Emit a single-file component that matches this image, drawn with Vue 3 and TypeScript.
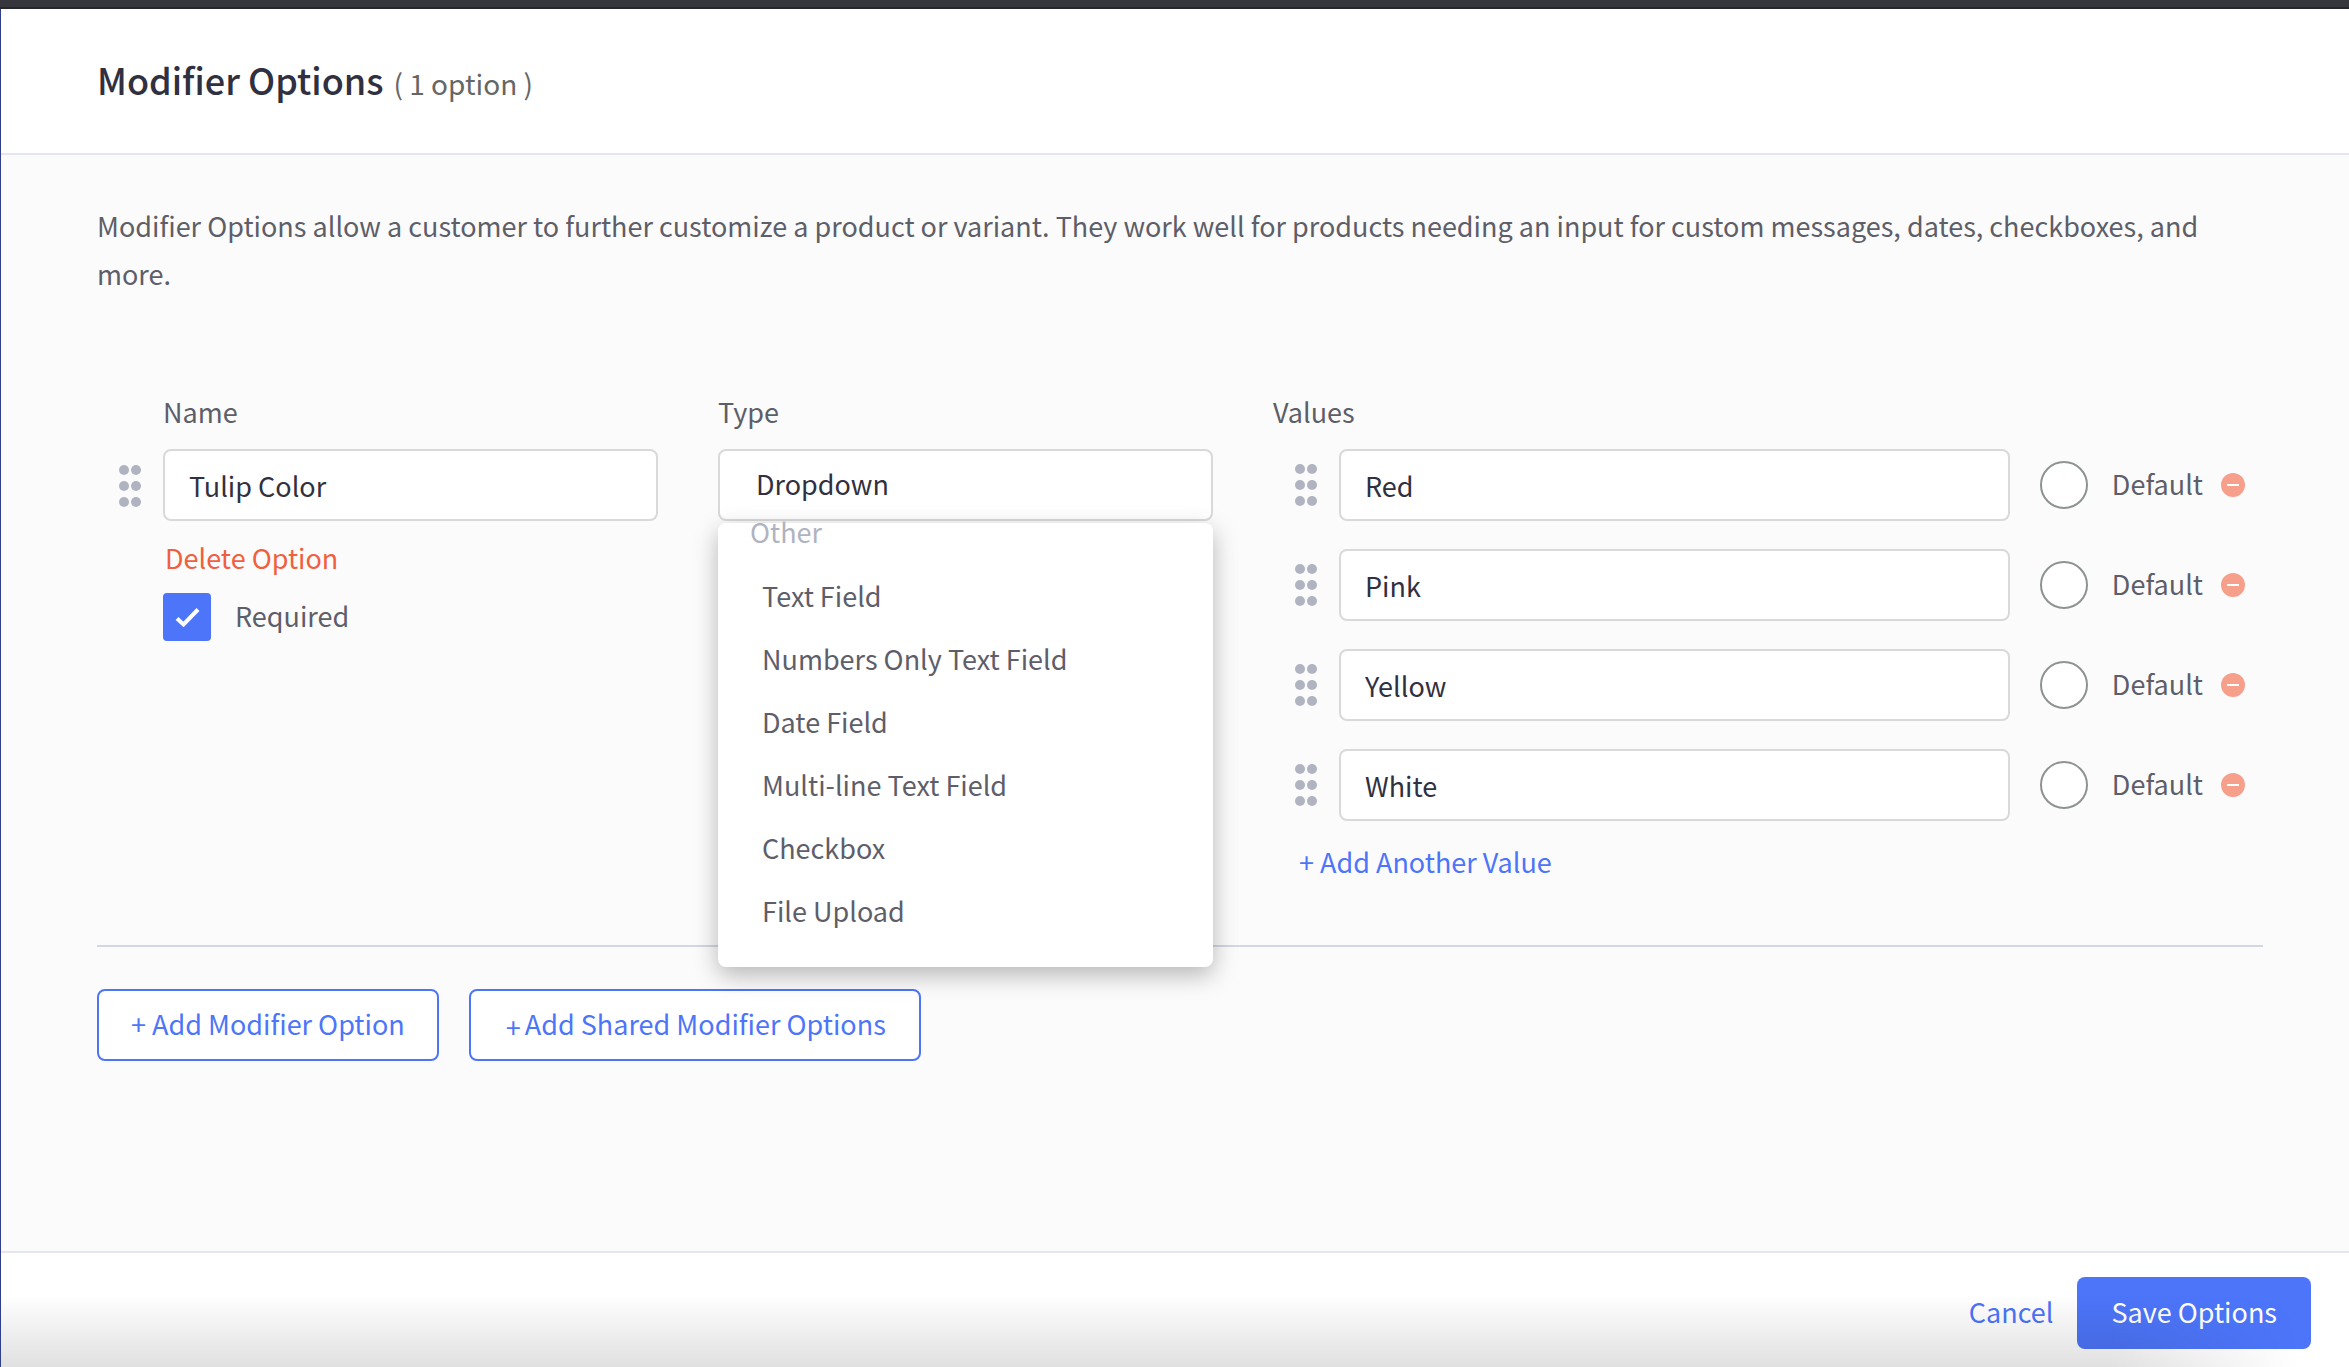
<script setup lang="ts">
import { ref } from 'vue'

interface OptionValue {
  id: number
  label: string
}

const name = ref('Tulip Color')
const required = ref(true)
const type = ref('Dropdown')
const defaultValue = ref<number | null>(null)

const values = ref<OptionValue[]>([
  { id: 1, label: 'Red' },
  { id: 2, label: 'Pink' },
  { id: 3, label: 'Yellow' },
  { id: 4, label: 'White' },
])

const otherTypes: string[] = [
  'Text Field',
  'Numbers Only Text Field',
  'Date Field',
  'Multi-line Text Field',
  'Checkbox',
  'File Upload',
]

function addValue(): void {
  values.value.push({ id: Date.now(), label: '' })
}

function removeValue(id: number): void {
  values.value = values.value.filter((v) => v.id !== id)
}
</script>

<template>
  <div class="page">
    <div class="topbar"></div>
    <header class="header">
      <h1 class="title">Modifier Options</h1>
      <span class="count">( 1 option )</span>
    </header>

    <main class="body">
      <p class="intro">
        Modifier Options allow a customer to further customize a product or variant. They work well for products
        needing an input for custom messages, dates, checkboxes, and more.
      </p>

      <section class="option">
        <div class="grip-cell">
          <svg class="grip" viewBox="0 0 22 42" aria-hidden="true">
            <circle cx="5" cy="5" r="5" /><circle cx="17" cy="5" r="5" />
            <circle cx="5" cy="21" r="5" /><circle cx="17" cy="21" r="5" />
            <circle cx="5" cy="37" r="5" /><circle cx="17" cy="37" r="5" />
          </svg>
        </div>

        <div class="column">
          <label class="label" for="option-name">Name</label>
          <input id="option-name" v-model="name" class="field" type="text" />
          <button class="delete" type="button">Delete Option</button>
          <label class="required">
            <span class="check">
              <input v-model="required" type="checkbox" />
              <svg viewBox="0 0 48 48" aria-hidden="true"><path d="M14 25.500L20.500 31.500L35 16.500" /></svg>
            </span>
            Required
          </label>
        </div>

        <div class="column">
          <label class="label" for="option-type">Type</label>
          <div class="type">
            <select id="option-type" v-model="type" class="field select">
              <option>Dropdown</option>
              <option v-for="t in otherTypes" :key="t">{{ t }}</option>
            </select>
            <div class="menu">
              <div class="group">Other</div>
              <ul class="items" role="listbox" aria-label="Type">
                <li v-for="t in otherTypes" :key="t" class="item" role="option" @click="type = t">{{ t }}</li>
              </ul>
            </div>
          </div>
        </div>

        <div class="column wide">
          <span class="label">Values</span>
          <div class="rows">
            <div v-for="v in values" :key="v.id" class="row">
              <svg class="grip" viewBox="0 0 22 42" aria-hidden="true">
                <circle cx="5" cy="5" r="5" /><circle cx="17" cy="5" r="5" />
                <circle cx="5" cy="21" r="5" /><circle cx="17" cy="21" r="5" />
                <circle cx="5" cy="37" r="5" /><circle cx="17" cy="37" r="5" />
              </svg>
              <input v-model="v.label" class="field value" type="text" aria-label="Value" />
              <label class="default">
                <input v-model="defaultValue" type="radio" name="default-value" :value="v.id" />
                Default
              </label>
              <button class="remove" type="button" aria-label="Remove value" @click="removeValue(v.id)">
                <svg viewBox="0 0 24 24" aria-hidden="true">
                  <circle cx="12" cy="12" r="12" />
                  <rect x="6" y="11" width="12" height="2" />
                </svg>
              </button>
            </div>
          </div>
          <button class="add-value" type="button" @click="addValue">+ Add Another Value</button>
        </div>
      </section>

      <div class="actions">
        <button class="outline" type="button">+ Add Modifier Option</button>
        <button class="outline shared" type="button"><span class="plus">+</span>Add Shared Modifier Options</button>
      </div>
    </main>

    <footer class="footer">
      <button class="cancel" type="button">Cancel</button>
      <button class="save" type="button">Save Options</button>
    </footer>
  </div>
</template>

<style>
body {
  margin: 0;
}
</style>

<style scoped>
.page,
.page * {
  box-sizing: border-box;
}

.page {
  display: flex;
  flex-direction: column;
  min-height: 100vh;
  border-left: 1px solid #2f3f8c;
  background: #fbfbfb;
  color: #5e5e69;
  font-family: 'Noto Sans CJK SC', 'Noto Sans', sans-serif;
  font-size: 27px;
  line-height: 36px;
}

button,
input,
select {
  margin: 0;
  padding: 0;
  border: 0;
  background: none;
  color: inherit;
  font: inherit;
}

button {
  cursor: pointer;
}

.topbar {
  height: 9px;
  margin-left: -1px;
  border-bottom: 2px solid #26272b;
  background: #36373c;
}

.header {
  display: flex;
  align-items: baseline;
  gap: 10px;
  padding: 46px 96px 50px;
  border-bottom: 2px solid #e3e5ef;
  background: #fff;
}

.title {
  margin: 0;
  color: #313040;
  font-size: 36px;
  font-weight: 500;
  line-height: 48px;
}

.count {
  color: #666;
  font-size: 28px;
}

.body {
  flex: 1;
  padding: 47px 86px 48px 96px;
}

.intro {
  margin: 0 0 96px;
  line-height: 48px;
}

.option {
  display: flex;
  padding-bottom: 65px;
  border-bottom: 2px solid #d3d6e3;
}

.column {
  display: flex;
  flex: 1 1 0;
  flex-direction: column;
  align-items: flex-start;
  min-width: 0;
}

.column + .column {
  margin-left: 60px;
}

.column.wide {
  flex-grow: 2;
}

.label {
  margin-bottom: 19px;
}

.grip-cell {
  flex: none;
  width: 66px;
  padding: 71px 0 0 22px;
}

.grip {
  display: block;
  flex: none;
  width: 22px;
  height: 42px;
  fill: #b0b4c1;
}

.field {
  width: 100%;
  height: 72px;
  padding: 0 24px;
  border: 2px solid #d9d9d9;
  border-radius: 8px;
  background: #fff;
  color: #313040;
}

.delete {
  margin: 19px 0 17px 2px;
  color: #f0603f;
}

.required,
.default {
  display: flex;
  align-items: flex-start;
  gap: 24px;
  height: 48px;
  line-height: 46px;
}

.check {
  display: grid;
  width: 48px;
  height: 48px;
}

.check input,
.check svg {
  grid-area: 1 / 1;
  width: 48px;
  height: 48px;
}

.check input {
  appearance: none;
  border: 2px solid #8d9292;
  border-radius: 4px;
  background: #fff;
}

.check input:checked {
  border-color: #4d75f9;
  background: #4d75f9;
}

.check svg {
  fill: none;
  stroke: #fff;
  stroke-width: 4;
  pointer-events: none;
}

.type {
  position: relative;
  width: 100%;
}

.select {
  display: block;
  padding: 0 36px 2px;
  appearance: none;
}

.menu {
  position: absolute;
  top: 74px;
  left: 0;
  z-index: 1;
  width: 100%;
  padding-bottom: 25px;
  border-radius: 8px;
  background: #fff;
  box-shadow: 0 8px 24px rgba(0, 0, 0, 0.28);
}

.group {
  margin-bottom: 23px;
  padding-left: 32px;
  color: #b0b4c1;
  line-height: 18px;
}

.items {
  margin: 0;
  padding: 0;
  list-style: none;
}

.item {
  padding-left: 44px;
  line-height: 63px;
}

.rows {
  display: flex;
  flex-direction: column;
  gap: 28px;
  width: 100%;
}

.row {
  display: flex;
  align-items: center;
  padding: 0 18px 0 22px;
}

.value {
  flex: 1;
  min-width: 0;
  margin: 0 30px 0 22px;
}

.default {
  margin-right: 18px;
}

.default input {
  appearance: none;
  width: 48px;
  height: 48px;
  border: 2px solid #8d9292;
  border-radius: 50%;
  background: #fff;
}

.default input:checked {
  border: 14px solid #4d75f9;
}

.remove svg {
  display: block;
  width: 24px;
  height: 24px;
  fill: #f6a08c;
}

.remove rect {
  fill: #fff;
}

.add-value {
  margin: 23px 0 0 26px;
  color: #4d75f9;
}

.actions {
  display: flex;
  gap: 30px;
  padding-top: 42px;
}

.outline {
  display: flex;
  align-items: center;
  gap: 4px;
  height: 72px;
  padding: 0 32px 2px;
  border: 2px solid #4d75f9;
  border-radius: 8px;
  background: #fff;
  color: #4d75f9;
}

.shared {
  padding: 0 33px 2px 35px;
}

.plus {
  padding-top: 6px;
}

.footer {
  position: relative;
  display: flex;
  justify-content: flex-end;
  gap: 24px;
  padding: 24px 38px 18px;
  border-top: 2px solid #e3e5ef;
  background: #fff;
}

/* Soft shade along the bottom edge, fading out under the save button. */
.footer::after {
  content: '';
  position: absolute;
  right: 0;
  bottom: 0;
  left: 0;
  height: 72px;
  background: linear-gradient(rgba(0, 0, 0, 0), rgba(0, 0, 0, 0.12));
  mask-image: linear-gradient(to right, #000 calc(100% - 240px), transparent calc(100% - 50px));
  pointer-events: none;
}

.cancel {
  padding-bottom: 2px;
  color: #4d75f9;
}

.save {
  height: 72px;
  padding: 0 34px 2px;
  border-radius: 8px;
  background: #4d75f9;
  color: #fff;
}
</style>
